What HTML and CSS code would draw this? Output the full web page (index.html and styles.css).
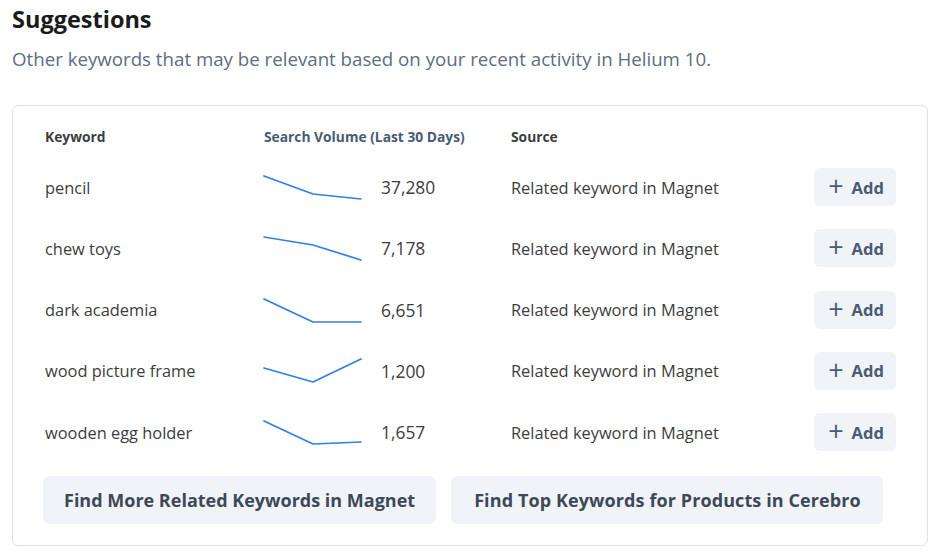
FILE: index.html
```html
<!DOCTYPE html>
<html>
<head>
<meta charset="utf-8">
<link rel="stylesheet" href="styles.css">
</head>
<body>
<div class="page">
  <h1 class="title">Suggestions</h1>
  <p class="subtitle">Other keywords that may be relevant based on your recent activity in Helium 10.</p>
  <div class="card">
    <div class="table">
      <div class="row head">
        <div class="c-kw">Keyword</div>
        <div class="c-vol">Search Volume (Last 30 Days)</div>
        <div class="c-src">Source</div>
        <div class="c-act"></div>
      </div>
      <div class="row">
        <div class="c-kw">pencil</div>
        <div class="c-vol"><svg class="spark" viewBox="0 0 100 40" width="100" height="40"><polyline points="1,9 50,27 98,32"/></svg><span class="num">37,280</span></div>
        <div class="c-src">Related keyword in Magnet</div>
        <div class="c-act"><button class="add"><span class="plus">+</span>Add</button></div>
      </div>
      <div class="row">
        <div class="c-kw">chew toys</div>
        <div class="c-vol"><svg class="spark" viewBox="0 0 100 40" width="100" height="40"><polyline points="1,9 50,17 98,32"/></svg><span class="num">7,178</span></div>
        <div class="c-src">Related keyword in Magnet</div>
        <div class="c-act"><button class="add"><span class="plus">+</span>Add</button></div>
      </div>
      <div class="row">
        <div class="c-kw">dark academia</div>
        <div class="c-vol"><svg class="spark" viewBox="0 0 100 40" width="100" height="40"><polyline points="1,9 50,32 98,32"/></svg><span class="num">6,651</span></div>
        <div class="c-src">Related keyword in Magnet</div>
        <div class="c-act"><button class="add"><span class="plus">+</span>Add</button></div>
      </div>
      <div class="row">
        <div class="c-kw">wood picture frame</div>
        <div class="c-vol"><svg class="spark" viewBox="0 0 100 40" width="100" height="40"><polyline points="1,17 50,31 98,8"/></svg><span class="num">1,200</span></div>
        <div class="c-src">Related keyword in Magnet</div>
        <div class="c-act"><button class="add"><span class="plus">+</span>Add</button></div>
      </div>
      <div class="row">
        <div class="c-kw">wooden egg holder</div>
        <div class="c-vol"><svg class="spark" viewBox="0 0 100 40" width="100" height="40"><polyline points="1,9 50,32 98,30"/></svg><span class="num">1,657</span></div>
        <div class="c-src">Related keyword in Magnet</div>
        <div class="c-act"><button class="add"><span class="plus">+</span>Add</button></div>
      </div>
    </div>
    <div class="actions">
      <button class="big">Find More Related Keywords in Magnet</button>
      <button class="big">Find Top Keywords for Products in Cerebro</button>
    </div>
  </div>
</div>
</body>
</html>
```
FILE: styles.css
```css
* { box-sizing: border-box; }
html, body { margin: 0; padding: 0; background: #ffffff; }
body { font-family: "Open Sans", "Lato", sans-serif; color: #3d3d3d; }
.page { padding: 4px 8px 0 12px; }
.title {
  margin: 0;
  font-size: 23.5px;
  font-weight: 700;
  color: #1b1b1b;
  line-height: 30px;
}
.subtitle {
  margin: 13px 0 0 0;
  font-size: 18.7px;
  line-height: 24px;
  color: #5d6e82;
}
.card {
  margin-top: 34px;
  width: 916px;
  height: 441px;
  border: 1px solid #dde2e8;
  border-radius: 6px;
  padding: 11px 32px 0 30px;
}
.row {
  display: grid;
  grid-template-columns: 219px 247px 303px 82px;
  align-items: center;
  height: 61.25px;
  padding-left: 2px;
}
.row.head {
  height: 39.5px;
  font-size: 13.8px;
  font-weight: 700;
  color: #4b5b72;
}
.row:not(.head) { font-size: 16.4px; }
.c-kw { color: #3d3d3d; }
.c-vol { display: flex; align-items: center; }
.spark { display: block; flex: none; margin-left: -1px; }
.spark polyline { fill: none; stroke: #2f7fe6; stroke-width: 1.7; stroke-linejoin: round; stroke-linecap: round; }
.num { margin-left: 18px; color: #3d3d3d; font-size: 17.4px; }
.c-src { color: #3d3d3d; }
.add {
  width: 82px;
  height: 38px;
  border: none;
  border-radius: 6px;
  background: #f0f3f7;
  font-family: inherit;
  font-size: 16.5px;
  font-weight: 700;
  color: #4b5b72;
  display: flex;
  align-items: center;
  justify-content: center;
  padding: 0 0 0 2px;
}
.plus { font-size: 27px; font-weight: 400; margin-right: 8px; line-height: 1; margin-top: -3px; }
.actions {
  display: flex;
  gap: 15px;
  margin-top: 13px;
}
.big {
  height: 48px;
  border: none;
  border-radius: 6px;
  background: #f0f3f7;
  font-family: inherit;
  font-size: 18px;
  font-weight: 700;
  color: #3e4858;
  padding: 0 21px;
}
.big + .big { padding: 0 22px 0 23px; letter-spacing: 0.1px; }
```
